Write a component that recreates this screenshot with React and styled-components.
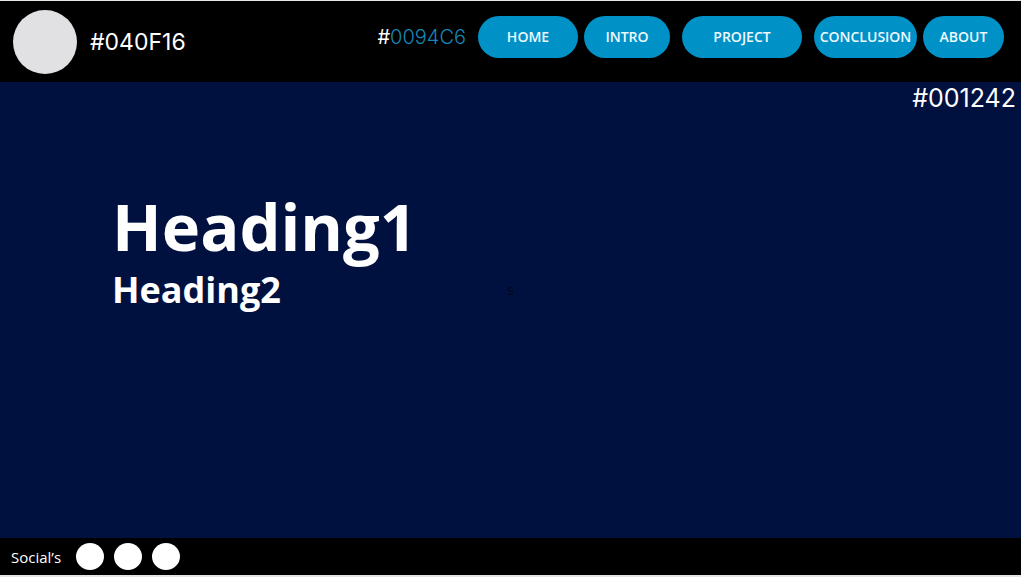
import React from "react";
import styled, { createGlobalStyle } from "styled-components";

const GlobalStyle = createGlobalStyle`
  *, *::before, *::after { box-sizing: border-box; }
  body {
    margin: 0;
    background: #001140;
    color: #ffffff;
    font-family: "Open Sans", "Noto Sans", sans-serif;
  }
  h1, h2, p, ul { margin: 0; padding: 0; }
`;

const Page = styled.div`
  display: flex;
  flex-direction: column;
  min-height: 100vh;
  border-top: 1px solid #e2e8e8;
  border-bottom: 2px solid #e4e4e4;
`;

const Header = styled.header`
  display: flex;
  justify-content: space-between;
  align-items: flex-start;
  padding: 9px 17px 8px 13px;
  background: #000000;
`;

const Brand = styled.div`
  display: flex;
  align-items: center;
  gap: 13px;
`;

const Logo = styled.div`
  width: 64px;
  height: 64px;
  border-radius: 50%;
  background: #e1e1e3;
`;

const ColorCode = styled.p`
  font-family: Inter, sans-serif;
  font-size: ${({ $size }) => $size}px;
  line-height: 32px;
  color: #ffffff;
`;

const Nav = styled.nav`
  display: flex;
  align-items: center;
  gap: 12px;
  padding-top: 6px;
`;

const NavGroup = styled.div`
  display: flex;
  gap: 6px;
`;

const NavLink = styled.a`
  display: flex;
  align-items: center;
  justify-content: center;
  width: ${({ $width }) => $width}px;
  height: 42px;
  border-radius: 21px;
  background: #0091c7;
  color: #eefaff;
  font-size: 14px;
  font-weight: 600;
  line-height: 20px;
  text-decoration: none;
`;

const Accent = styled.span`
  color: #1688b8;
  font-weight: 300;
`;

const Main = styled.main`
  flex: 1;
  background: #001140;
`;

const Corner = styled.div`
  display: flex;
  justify-content: flex-end;
  padding-right: 5px;
`;

const Hero = styled.section`
  display: grid;
  grid-template-columns: 1fr auto 1fr;
  align-items: end;
  padding-top: 72px;
`;

const Headings = styled.div`
  padding-left: 112px;
`;

const Title = styled.h1`
  font-size: 65px;
  font-weight: 700;
  line-height: 80px;
`;

const Subtitle = styled.h2`
  font-size: 36px;
  font-weight: 700;
  line-height: 48px;
`;

const Mark = styled.p`
  padding-bottom: 16px;
  color: #000618;
  font-size: 14px;
  line-height: 16px;
`;

const Footer = styled.footer`
  display: flex;
  align-items: center;
  gap: 15px;
  padding: 5px 11px;
  background: #000000;
  font-size: 15px;
  line-height: 20px;
`;

const Socials = styled.ul`
  display: flex;
  gap: 10px;
  list-style: none;
`;

const SocialLink = styled.a`
  display: block;
  width: 28px;
  height: 27px;
  border-radius: 50%;
  background: #ffffff;
`;

const navGroups = [
  [
    { label: "HOME", width: 100 },
    { label: "INTRO", width: 86 },
  ],
  [{ label: "PROJECT", width: 120 }],
  [
    { label: "CONCLUSION", width: 103 },
    { label: "ABOUT", width: 81 },
  ],
];

export default function App() {
  return (
    <>
      <GlobalStyle />
      <Page>
        <Header>
          <Brand>
            <Logo />
            <ColorCode $size={23}>#040F16</ColorCode>
          </Brand>
          <Nav>
            <ColorCode $size={20}>
              #<Accent>0094C6</Accent>
            </ColorCode>
            {navGroups.map((group) => (
              <NavGroup key={group[0].label}>
                {group.map(({ label, width }) => (
                  <NavLink key={label} href="#" $width={width}>
                    {label}
                  </NavLink>
                ))}
              </NavGroup>
            ))}
          </Nav>
        </Header>
        <Main>
          <Corner>
            <ColorCode $size={25}>#001242</ColorCode>
          </Corner>
          <Hero>
            <Headings>
              <Title>Heading1</Title>
              <Subtitle>Heading2</Subtitle>
            </Headings>
            <Mark>s</Mark>
          </Hero>
        </Main>
        <Footer>
          <p>Social’s</p>
          <Socials>
            <li><SocialLink href="#" /></li>
            <li><SocialLink href="#" /></li>
            <li><SocialLink href="#" /></li>
          </Socials>
        </Footer>
      </Page>
    </>
  );
}
